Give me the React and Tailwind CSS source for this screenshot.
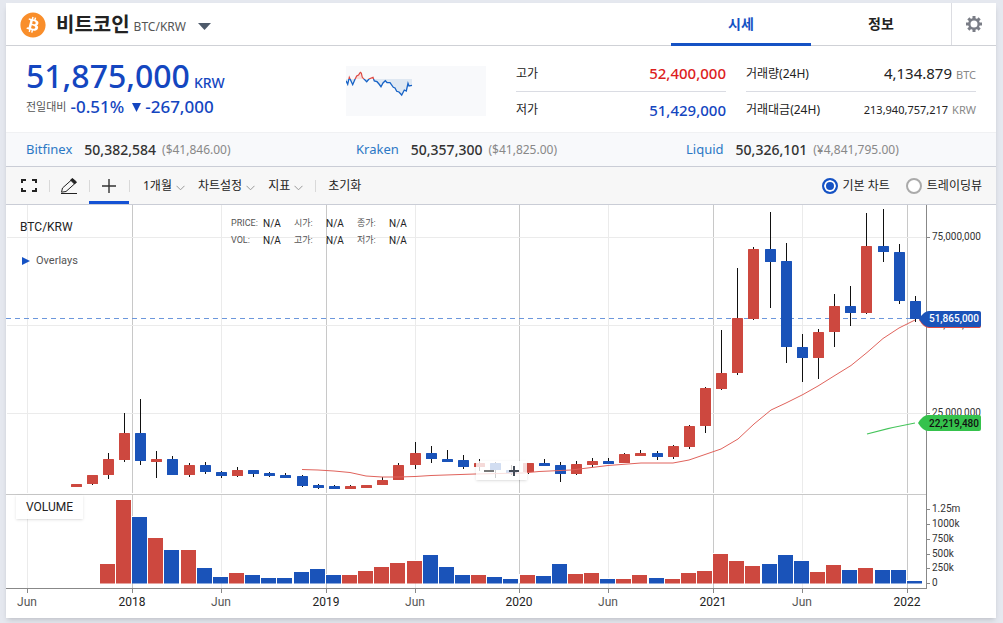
import React, { useState } from 'react';
import { FaBitcoin } from 'react-icons/fa';

const RED = '#cd483f';
const BLUE = '#1a53b9';

// direction, body top, body bottom, high, low, volume top
const CANDLES = [
  ['up', 484, 487, 484, 487, null],
  ['up', 475, 484, 475, 485, null],
  ['up', 459, 475, 453, 479, 564],
  ['up', 433, 460, 413, 462, 500],
  ['down', 433, 461, 399, 465, 517],
  ['up', 459, 462, 451, 478, 538],
  ['down', 459, 475, 456, 475, 550],
  ['up', 465, 475, 463, 477, 550],
  ['down', 465, 472, 462, 474, 568],
  ['down', 472, 476, 471, 478, 577],
  ['up', 470, 476, 467, 477, 573],
  ['down', 470, 474, 470, 477, 575],
  ['down', 473, 476, 472, 477, 578],
  ['down', 475, 478, 473, 478, 578],
  ['down', 476, 486, 475, 487, 572],
  ['down', 485, 488, 484, 489, 569],
  ['down', 486, 489, 485, 489, 575],
  ['up', 486, 489, 485, 489, 575],
  ['up', 485, 488, 485, 488, 571],
  ['up', 480, 485, 477, 485, 567],
  ['up', 465, 480, 463, 480, 563],
  ['up', 453, 465, 442, 469, 561],
  ['down', 453, 459, 446, 463, 555],
  ['down', 459, 462, 450, 462, 567],
  ['down', 460, 467, 455, 469, 575],
  ['up', 463, 467, 459, 471, 575],
  ['down', 463, 470, 462, 478, 577],
  ['down', 470, 473, 465, 475, 579],
  ['up', 463, 472, 463, 474, 575],
  ['down', 463, 466, 459, 466, 576],
  ['down', 465, 474, 462, 482, 564],
  ['up', 464, 474, 461, 475, 574],
  ['up', 461, 465, 458, 467, 573],
  ['down', 461, 464, 458, 464, 579],
  ['up', 454, 463, 453, 463, 579],
  ['up', 453, 456, 450, 456, 575],
  ['down', 453, 457, 451, 460, 578],
  ['up', 446, 457, 445, 459, 579],
  ['up', 426, 447, 425, 449, 573],
  ['up', 388, 426, 387, 433, 571],
  ['up', 373, 389, 330, 390, 554],
  ['up', 318, 373, 268, 375, 561],
  ['up', 249, 319, 247, 320, 566],
  ['down', 249, 262, 212, 308, 564],
  ['down', 261, 347, 243, 363, 555],
  ['down', 347, 358, 334, 382, 561],
  ['up', 332, 358, 329, 379, 572],
  ['up', 306, 332, 294, 347, 565],
  ['down', 306, 313, 286, 326, 570],
  ['up', 246, 313, 213, 314, 568],
  ['down', 246, 252, 209, 262, 570],
  ['down', 252, 301, 244, 304, 570],
  ['down', 301, 319, 296, 322, 581],
];

const TIME_TICKS = [
  [27, 'Jun'],
  [132, '2018'],
  [221, 'Jun'],
  [326, '2019'],
  [415, 'Jun'],
  [519, '2020'],
  [608, 'Jun'],
  [713, '2021'],
  [802, 'Jun'],
  [907, '2022'],
];

const PRICE_TICKS = [
  [237, '75,000,000'],
  [325, '50,000,000'],
  [413, '25,000,000'],
];

const VOLUME_TICKS = [
  [509, '1.25m'],
  [524, '1000k'],
  [539, '750k'],
  [554, '500k'],
  [568, '250k'],
  [583, '0'],
];

const EXCHANGES = [
  { name: 'Bitfinex', price: '50,382,584', converted: '($41,846.00)' },
  { name: 'Kraken', price: '50,357,300', converted: '($41,825.00)' },
  { name: 'Liquid', price: '50,326,101', converted: '(¥4,841,795.00)' },
];

const OHLC = [
  ['PRICE:', 'N/A', '시가:', 'N/A', '종가:', 'N/A'],
  ['VOL:', 'N/A', '고가:', 'N/A', '저가:', 'N/A'],
];

const MA_SHORT =
  '302,469.5 318,470 334,471 350,472.5 366,476 382,477 398,477 415,476.5 431,475.5 475,474 500,473.5 523,473 539,471.5 571,470 608,465.5 641,463 673,463 689,460 705,454.5 721,449 738,439 754,424 771,410 786,403 803,394.5 818,386 834,376 851,365.5 867,352.5 883,338.5 899,328 915,320';

const SPARK =
  '0,14.7 1.7,18.3 3.3,11.3 6.7,18.7 9,13.3 10.7,10 12.5,9 14.3,6.3 15.3,7 16.3,11.3 18.3,13.3 20.7,15.7 23,13 27,11.3 28.3,15 31,15.7 33,18 35,20.7 37,17 39.3,14.7 41,16.5 44,16.7 47.3,21.3 49,22 50.7,25.3 53,26 55.7,29 58.3,24 60.3,25 62,17.3 63,20 66,19.3';

const candleLeft = (i) => Math.floor(71.085 + i * 16.14);

const GearIcon = () => (
  <svg className="w-4 h-4" viewBox="0 0 16 16" fill="none" stroke="#7a7d86" aria-hidden>
    <circle cx="8" cy="8" r="4.7" strokeWidth="2.4" />
    {[0, 45, 90, 135, 180, 225, 270, 315].map((a) => (
      <path key={a} d="M8 0v3" strokeWidth="3" transform={`rotate(${a} 8 8)`} />
    ))}
  </svg>
);

const Chevron = () => (
  <svg className="w-[9px] h-[6px] mt-1" viewBox="0 0 9 6" fill="none" stroke="#999" aria-hidden>
    <path d="M.5 .8l4 4 4-4" />
  </svg>
);

const Separator = () => <span className="w-px h-3 bg-[#d9d9d9]" />;

const Sparkline = () => (
  <svg className="w-[140px] h-[50px] bg-[#f8f9fb]" viewBox="0 0 140 50" fill="none" role="img" aria-label="Sparkline">
    <clipPath id="above"><rect width="140" height="13" /></clipPath>
    <clipPath id="below"><rect y="13" width="140" height="37" /></clipPath>
    <g clipPath="url(#above)">
      <polygon points={`0,13 ${SPARK} 66,13`} fill="#f7dedd" />
      <polyline points={SPARK} stroke="#dd4a44" strokeWidth="1.2" />
    </g>
    <g clipPath="url(#below)">
      <polygon points={`0,13 ${SPARK} 66,13`} fill="#dfe8f2" />
      <polyline points={SPARK} stroke="#1763c6" strokeWidth="1.3" />
    </g>
  </svg>
);

const DetailRow = ({ label, value, unit, valueClass }) => (
  <div className="flex items-center justify-between h-9">
    <dt className="text-xs text-[#222]">{label}</dt>
    <dd className="flex items-baseline gap-1">
      <span className={valueClass}>{value}</span>
      {unit && <span className="text-[11px] text-[#888]">{unit}</span>}
    </dd>
  </div>
);

const Chart = () => (
  <svg className="block w-full h-auto font-[Roboto,sans-serif]" viewBox="6 205 990 413" role="img" aria-label="BTC/KRW chart">
    <g shapeRendering="crispEdges">
      {TIME_TICKS.map(([x, label]) => (
        <g key={x} fill={label === 'Jun' ? '#ebebeb' : '#c8c8c8'}>
          <rect x={x} y="205" width="1" height="288" />
          <rect x={x} y="495" width="1" height="93" />
          <rect x={x} y="588" width="1" height="5" fill="#888" />
        </g>
      ))}
      {PRICE_TICKS.map(([y]) => (
        <g key={y}>
          <rect x="7" y={y} width="919" height="1" fill="#ebebeb" />
          <rect x="926" y={y} width="4" height="1" fill="#888" />
        </g>
      ))}
      {VOLUME_TICKS.map(([y]) => (
        <rect key={y} x="926" y={y} width="4" height="1" fill="#888" />
      ))}
      <rect x="6" y="494" width="920" height="1" fill="#c8c8c8" />
      <rect x="926" y="205" width="1" height="384" fill="#888" />
      <rect x="6" y="588" width="921" height="1" fill="#888" />
    </g>
    <path d="M6 318.5H920" stroke="#6c97dc" strokeDasharray="5 4" />

    {CANDLES.map(([dir, top, bottom, high, low, volume], i) => {
      const x = candleLeft(i);
      const fill = dir === 'up' ? RED : BLUE;
      return (
        <g key={i}>
          <rect x={x + 5} y={high} width="1" height={low - high} fill="#111" />
          <rect x={x} y={top} width="11" height={bottom - top} rx="0.5" fill={fill} />
          {volume && (
            <>
              <rect x={x - 4} y={volume - 1} width="16" height={584 - volume} fill="#fff" />
              <rect x={x - 3} y={volume} width="15" height={583 - volume} fill={fill} />
              <rect x={x - 3} y="583" width="15" height="1" fill={fill} opacity="0.5" />
            </>
          )}
        </g>
      );
    })}

    <polyline points={MA_SHORT} fill="none" stroke="#e0635c" />
    <path d="M867 434Q890 427.500 915 423" fill="none" stroke="#44c45a" strokeWidth="1.2" />

    <g fontSize="10" fill="#333">
      {PRICE_TICKS.map(([y, label]) => (
        <text key={y} x="932" y={y + 3}>{label}</text>
      ))}
      {VOLUME_TICKS.map(([y, label]) => (
        <text key={y} x="932" y={y + 3}>{label}</text>
      ))}
    </g>
    <g fontSize="12" textAnchor="middle">
      {TIME_TICKS.map(([x, label]) => (
        <text key={x} x={x} y="606" fill={label === 'Jun' ? '#555' : '#222'}>{label}</text>
      ))}
    </g>

    <g fontSize="10" fontWeight="500">
      <path d="M919 320q5-8 10-8h50a2 2 0 0 1 2 2v12a2 2 0 0 1-2 2h-50q-5 0-10-8z" fill="#dd4a44" />
      <path d="M919 319q5-8 10-8h50a2 2 0 0 1 2 2v12a2 2 0 0 1-2 2h-50q-5 0-10-8z" fill={BLUE} />
      <text x="929" y="322" fill="#fff">51,865,000</text>
      <path d="M918 423q5-8 10-8h51a2 2 0 0 1 2 2v12a2 2 0 0 1-2 2h-51q-5 0-10-8z" fill="#35c24c" />
      <text x="929" y="427" fill="#111">22,219,480</text>
    </g>
  </svg>
);

const App = () => {
  const [tab, setTab] = useState('시세');
  const [chartType, setChartType] = useState('기본 차트');
  const [interval, setInterval] = useState('1개월');

  return (
    <div className="min-h-screen bg-[#e5e8ef] pt-[3px] pb-1 pl-[6px] pr-[7px] text-[#222] font-['Noto_Sans','Noto_Sans_CJK_KR',sans-serif]">
      <main className="bg-white shadow-md">
        <header className="flex h-[43px] border-b border-[#cfd1d6]">
          <div className="flex flex-1 items-center pt-px pl-[14px]">
            <FaBitcoin className="w-[26px] h-[26px] text-[#f98e2b]" />
            <h1 className="ml-[10px] text-xl leading-6 font-bold">비트코인</h1>
            <span className="ml-1 mt-1 text-xs text-[#555]">BTC/KRW</span>
            <button type="button" aria-label="Select coin" className="ml-3 mt-1">
              <svg className="w-[13px] h-[7px]" viewBox="0 0 13 7" fill="#4e5a6b" aria-hidden>
                <path d="M0 0h13l-6.5 7z" />
              </svg>
            </button>
          </div>
          <nav className="flex">
            {['시세', '정보'].map((name) => (
              <button
                key={name}
                type="button"
                onClick={() => setTab(name)}
                className={`w-[140px] h-[43px] pt-px text-sm font-bold border-b-3 ${
                  tab === name ? 'border-[#1552c4] text-[#1552c4]' : 'border-transparent'
                }`}
              >
                {name}
              </button>
            ))}
          </nav>
          <button type="button" aria-label="Settings" className="flex items-center justify-center w-[45px] border-l border-[#dcdde2]">
            <GearIcon />
          </button>
        </header>

        <section className="flex items-start h-[87px] px-5 border-b border-[#f0f1f3]">
          <div className="flex-1 pt-3 text-[#1446c0]">
            <p className="flex items-baseline gap-1 font-medium">
              <strong className="text-[32px] leading-9 font-medium">51,875,000</strong>
              <span className="text-sm">KRW</span>
            </p>
            <p className="flex items-center mt-[3px] leading-5 text-[17px] font-medium">
              <span className="mr-1 text-[11px] font-normal text-[#555]">전일대비</span>
              <span>-0.51%</span>
              <svg className="ml-2 mr-1 w-[9px] h-[9px]" viewBox="0 0 9 9" fill="currentColor" aria-hidden>
                <path d="M0 0h9l-4.5 9z" />
              </svg>
              <span>-267,000</span>
            </p>
          </div>
          <div className="mt-5">
            <Sparkline />
          </div>
          <dl className="w-[210px] ml-[30px] mt-[10px] divide-y divide-[#dadce3]">
            <DetailRow label="고가" value="52,400,000" valueClass="text-[15px] font-medium text-[#dd1e1e]" />
            <DetailRow label="저가" value="51,429,000" valueClass="text-[15px] font-medium text-[#1446c0]" />
          </dl>
          <dl className="w-[230px] ml-5 mt-[10px] divide-y divide-[#dadce3]">
            <DetailRow label="거래량(24H)" value="4,134.879" unit="BTC" valueClass="text-[15px]" />
            <DetailRow label="거래대금(24H)" value="213,940,757,217" unit="KRW" valueClass="text-[11px]" />
          </dl>
        </section>

        <ul className="grid grid-cols-3 h-[34px] bg-[#f8f9fb] border-b border-[#cacdd6]">
          {EXCHANGES.map(({ name, price, converted }) => (
            <li key={name} className="flex items-center pl-5">
              <a href="#" className="text-[13px] text-[#2b78c5]">{name}</a>
              <span className="ml-3 text-sm font-medium text-[#333]">{price}</span>
              <span className="ml-[6px] text-xs text-[#888]">{converted}</span>
            </li>
          ))}
        </ul>

        <div className="flex items-center justify-between h-[38px] pr-[14px] bg-[#f7f7f7] border-b border-[#cacdd6] text-xs">
          <div className="flex items-center h-full">
            <button type="button" aria-label="Fullscreen" className="flex items-center justify-center w-[43px] pl-[2px]">
              <svg className="w-4 h-[13px]" viewBox="0 0 16 13" fill="none" stroke="#222" strokeWidth="2" aria-hidden>
                <path d="M5 1H1v3M11 1h4v3M5 12H1V9M11 12h4V9" />
              </svg>
            </button>
            <Separator />
            <button type="button" aria-label="Draw" className="flex items-center justify-center w-[39px] pr-[2px]">
              <svg className="w-4 h-4" viewBox="0 0 16 16" fill="none" stroke="#222" aria-hidden>
                <path d="M.5 14.2l1-4.200 9.500-8.500 3.500 3.500-9.500 8.500zM0 15.500h16" />
                <path d="M9.500 2l2-1.500L15.500 4l-2 2z" fill="#222" />
              </svg>
            </button>
            <Separator />
            <button type="button" aria-label="Crosshair" className="flex items-center justify-center w-[40px] h-[37px] -ml-px pt-[3px] border-b-3 border-[#1552d4]">
              <svg className="w-[14px] h-[14px]" viewBox="0 0 14 14" fill="none" stroke="#333" strokeWidth="1.4" aria-hidden>
                <path d="M7 0v14M0 7h14" />
              </svg>
            </button>
            <Separator />
            <div className="flex items-center ml-[13px] mr-3 gap-[13px]">
              <label className="flex items-center gap-1">
                <select
                  aria-label="Interval"
                  value={interval}
                  onChange={(e) => setInterval(e.target.value)}
                  className="appearance-none field-sizing-content bg-transparent"
                >
                  <option>1개월</option>
                </select>
                <Chevron />
              </label>
              <button type="button" className="flex items-center gap-1">차트설정 <Chevron /></button>
              <button type="button" className="flex items-center gap-1">지표 <Chevron /></button>
            </div>
            <Separator />
            <button type="button" className="ml-3">초기화</button>
          </div>
          <div className="flex items-center gap-4">
            {['기본 차트', '트레이딩뷰'].map((name) => (
              <label key={name} className="flex items-center gap-[5px]">
                <input
                  type="radio"
                  name="chart-type"
                  checked={chartType === name}
                  onChange={() => setChartType(name)}
                  className="appearance-none w-4 h-4 rounded-full border-2 border-[#aaa] bg-white checked:border-[#1552c4] checked:bg-[#1552c4] checked:shadow-[inset_0_0_0_2px_white]"
                />
                {name}
              </label>
            ))}
          </div>
        </div>

        <div className="relative font-[Roboto,'Noto_Sans_CJK_KR',sans-serif]">
          <Chart />
          <h2 className="absolute left-[14px] top-3 text-xs leading-5">BTC/KRW</h2>
          <button type="button" className="absolute left-4 top-12 flex items-center gap-[6px] text-[11px] leading-4 text-[#555]">
            <svg className="w-2 h-2" viewBox="0 0 8 8" fill="#1552c4" aria-hidden>
              <path d="M0 0l8 4-8 4z" />
            </svg>
            Overlays
          </button>
          <div className="absolute left-[225px] top-[10px] text-[10px] leading-[17px]">
            {OHLC.map((row) => (
              <div key={row[0]} className="grid grid-cols-[32px_31px_32px_31px_32px_auto]">
                {row.map((cell, i) => (
                  <span key={i} className={i % 2 ? 'text-[#222]' : 'text-[#555] text-[9px]'}>{cell}</span>
                ))}
              </div>
            ))}
          </div>
          <div className="absolute left-[470px] top-[256px] flex w-[51px] h-[19px] bg-white/80 shadow-sm">
            <button type="button" aria-label="Zoom out" className="flex flex-1 items-center justify-center">
              <span className="w-[10px] h-[2px] bg-[#777]" />
            </button>
            <button type="button" aria-label="Zoom in" className="flex flex-1 items-center justify-center">
              <svg className="w-[10px] h-[10px]" viewBox="0 0 10 10" stroke="#444b57" strokeWidth="2" aria-hidden>
                <path d="M5 0v10M0 5h10" />
              </svg>
            </button>
          </div>
          <div className="absolute left-[10px] top-[290px] px-[10px] bg-white/90 shadow-sm text-xs leading-6">VOLUME</div>
        </div>
      </main>
    </div>
  );
};

export default App;
